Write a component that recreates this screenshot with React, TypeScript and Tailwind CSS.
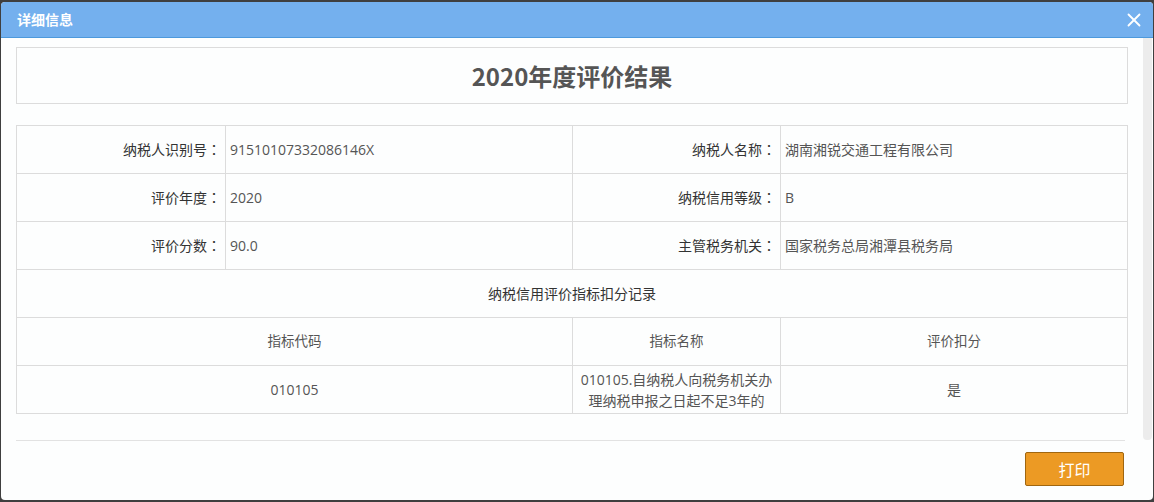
import { X } from 'lucide-react';

const info = [
  ['纳税人识别号', '91510107332086146X', '纳税人名称', '湖南湘锐交通工程有限公司'],
  ['评价年度', '2020', '纳税信用等级', 'B'],
  ['评价分数', '90.0', '主管税务机关', '国家税务总局湘潭县税务局'],
];

function Label({ text }: { text: string }) {
  return (
    <>
      {text}
      <span style={{ fontFamily: '"Noto Sans CJK JP", sans-serif' }}>：</span>
    </>
  );
}

export default function App() {
  return (
    <div
      className="w-[1154px] h-[502px] bg-[#3f3f3f] pt-[2px] px-[1px] pb-[2px]"
      style={{ fontFamily: '"Open Sans", "Noto Sans CJK SC", sans-serif' }}
    >
      <div className="h-full rounded-[4px] overflow-hidden bg-[#fdfefe] flex flex-col">
        {/* header */}
        <div className="h-[36px] shrink-0 bg-[#74b0ee] border-b border-[#4d99dc] flex items-center justify-between pl-[16px] pr-[8px]">
          <span className="text-white font-bold text-[14px]" style={{ fontFamily: '"Noto Sans CJK SC", sans-serif' }}>详细信息</span>
          <X className="w-[22px] h-[22px] text-white" strokeWidth={2} />
        </div>

        {/* body */}
        <div className="h-[402px] shrink-0 flex">
          <div className="flex-1 pl-[15px] pr-[15px] pt-[9px]">
            <div className="h-[57px] border border-[#dcdcdc] flex items-center justify-center">
              <h1 className="text-[24px] font-bold text-[#555]" style={{ fontFamily: '"Noto Sans CJK SC", sans-serif' }}>2020年度评价结果</h1>
            </div>

            <table className="mt-[21px] w-full border-collapse text-[14px] text-[#333] table-fixed">
              <colgroup>
                <col className="w-[209px]" />
                <col className="w-[347px]" />
                <col className="w-[208px]" />
                <col />
              </colgroup>
              <tbody>
                {info.map((r) => (
                  <tr key={r[0]} className="h-[48px]">
                    <td className="border border-[#dcdcdc] text-right pr-[4px]"><Label text={r[0]} /></td>
                    <td className="border border-[#dcdcdc] pl-[4px] text-[#555]">{r[1]}</td>
                    <td className="border border-[#dcdcdc] text-right pr-[4px]"><Label text={r[2]} /></td>
                    <td className="border border-[#dcdcdc] pl-[4px] text-[#555]">{r[3]}</td>
                  </tr>
                ))}
                <tr className="h-[48px]">
                  <td colSpan={4} className="border border-[#dcdcdc] text-center">纳税信用评价指标扣分记录</td>
                </tr>
                <tr className="h-[48px] text-[#555] text-[13.5px]">
                  <td colSpan={2} className="border border-[#dcdcdc] text-center">指标代码</td>
                  <td className="border border-[#dcdcdc] text-center">指标名称</td>
                  <td className="border border-[#dcdcdc] text-center">评价扣分</td>
                </tr>
                <tr className="h-[48px] text-[#555]">
                  <td colSpan={2} className="border border-[#dcdcdc] text-center">010105</td>
                  <td className="border border-[#dcdcdc] text-center leading-[21px] px-[4px]">010105.自纳税人向税务机关办理纳税申报之日起不足3年的</td>
                  <td className="border border-[#dcdcdc] text-center">是</td>
                </tr>
              </tbody>
            </table>
          </div>
          <div className="w-[9px] mr-[1px] bg-[#ececec] rounded-b-[4px]" />
        </div>

        {/* footer */}
        <div className="flex-1 ml-[15px] mr-[28px] border-t border-[#e2e2e2] flex justify-end items-start pt-[11px]">
          <button
            className="w-[99px] h-[34px] bg-[#ec9a24] border border-[#a06610] rounded-[2px] text-white text-[16px] mr-[1px]"
            style={{ fontFamily: '"Noto Sans CJK SC", sans-serif' }}
          >
            打印
          </button>
        </div>
      </div>
    </div>
  );
}
